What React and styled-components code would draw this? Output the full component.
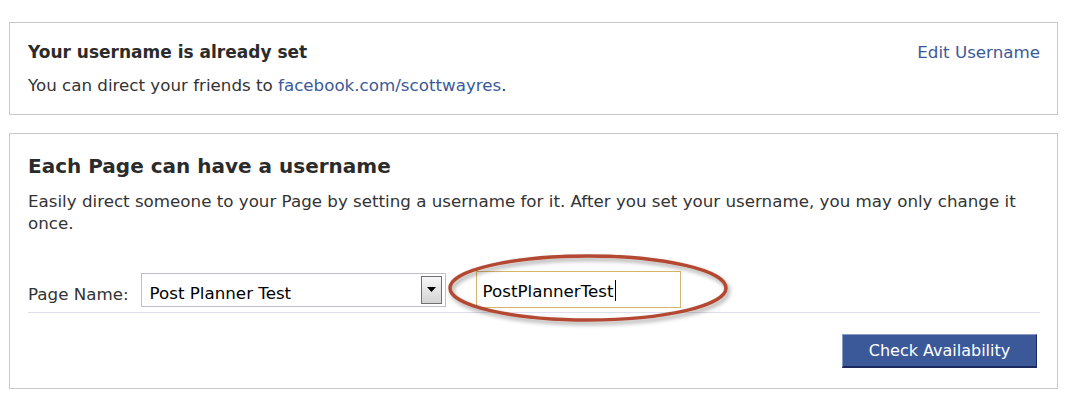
import styled, { createGlobalStyle } from 'styled-components';

const GlobalStyle = createGlobalStyle`
  body {
    margin: 0;
    background: #fff;
    font-family: "DejaVu Sans", Tahoma, sans-serif;
    color: #333;
  }
`;

const Page = styled.div`
  width: 1071px;
  padding: 22px 13px 0 9px;
  box-sizing: border-box;
  display: flex;
  flex-direction: column;
  gap: 18px;
`;

const Box = styled.div`
  border: 1px solid #c9c9c9;
  padding: ${(p) => p.pad};
`;

const TopRow = styled.div`
  display: flex;
  justify-content: space-between;
  align-items: baseline;
`;

const Title = styled.div`
  font-size: 17px;
  font-weight: bold;
  color: #2b2b2b;
  line-height: 22px;
`;

const Text = styled.div`
  font-size: 16.7px;
  line-height: 22px;
  color: #333;
  margin-top: ${(p) => p.mt || 0}px;
`;

const Link = styled.a`
  color: #3b5998;
  text-decoration: none;
  font-size: 16.7px;
`;

const Heading = styled.h2`
  margin: 0;
  font-size: 20px;
  line-height: 26px;
  font-weight: bold;
  color: #2b2b2b;
`;

const FormRow = styled.div`
  display: flex;
  align-items: center;
  margin-top: 37px;
  padding-bottom: 4px;
  border-bottom: 1px solid #dde0ea;
`;

const Label = styled.span`
  font-size: 16.7px;
  color: #333;
  margin: 8px 12px 0 0;
`;

const Select = styled.div`
  width: 305px;
  height: 34px;
  box-sizing: border-box;
  border: 1px solid #b9c1d0;
  display: flex;
  align-items: center;
  justify-content: space-between;
  padding: 0 3px 0 8px;
  font-size: 16.7px;
  color: #000;
  & > span {
    padding-top: 6px;
  }
`;

const Arrow = styled.div`
  width: 21px;
  height: 28px;
  box-sizing: border-box;
  border: 1px solid #707070;
  background: linear-gradient(#f6f6f6, #d4d4d4);
  display: flex;
  align-items: center;
  justify-content: center;
`;

const InputWrap = styled.div`
  position: relative;
  margin-left: 30px;
`;

const Input = styled.div`
  width: 205px;
  height: 37px;
  box-sizing: border-box;
  border: 1px solid #d8b56c;
  padding: 2px 6px 0;
  display: flex;
  align-items: center;
  font-size: 16.7px;
  color: #000;
`;

const Caret = styled.span`
  display: inline-block;
  width: 1px;
  height: 21px;
  background: #000;
  margin-left: 1px;
`;

const Ring = styled.svg`
  position: absolute;
  left: -30px;
  top: -18px;
  pointer-events: none;
  overflow: visible;
`;

const Actions = styled.div`
  display: flex;
  justify-content: flex-end;
  padding: 21px 3px 0 0;
`;

const Button = styled.button`
  width: 195px;
  height: 34px;
  background: #3b5998;
  border: 1px solid #8a9cc4;
  border-right-color: #1a2a5e;
  border-bottom: 2px solid #1a2a5e;
  color: #fff;
  font-family: inherit;
  font-size: 16px;
  padding: 0;
`;

export default function App() {
  return (
    <>
      <GlobalStyle />
      <Page>
        <Box pad="18px 17px 18px 18px">
          <TopRow>
            <Title>Your username is already set</Title>
            <Link href="#">Edit Username</Link>
          </TopRow>
          <Text mt={11}>
            You can direct your friends to <Link href="#">facebook.com/scottwayres</Link>.
          </Text>
        </Box>
        <Box pad="19px 17px 20px 18px">
          <Heading>Each Page can have a username</Heading>
          <Text mt={11}>
            Easily direct someone to your Page by setting a username for it. After you set your username, you may only change it once.
          </Text>
          <FormRow>
            <Label>Page Name:</Label>
            <Select>
              <span>Post Planner Test</span>
              <Arrow>
                <svg width="9" height="5" viewBox="0 0 9 5">
                  <path d="M0 0h9L4.5 5z" fill="#000" />
                </svg>
              </Arrow>
            </Select>
            <InputWrap>
              <Input>
                PostPlannerTest<Caret />
              </Input>
              <Ring width="284" height="72" viewBox="0 0 284 72">
                <defs>
                  <filter id="sh" x="-10%" y="-20%" width="120%" height="150%">
                    <feDropShadow dx="2" dy="3" stdDeviation="2" floodColor="#000" floodOpacity="0.35" />
                  </filter>
                </defs>
                <ellipse cx="142" cy="35" rx="138" ry="32" fill="none" stroke="#b34a33" strokeWidth="3.5" filter="url(#sh)" />
              </Ring>
            </InputWrap>
          </FormRow>
          <Actions>
            <Button>Check Availability</Button>
          </Actions>
        </Box>
      </Page>
    </>
  );
}
